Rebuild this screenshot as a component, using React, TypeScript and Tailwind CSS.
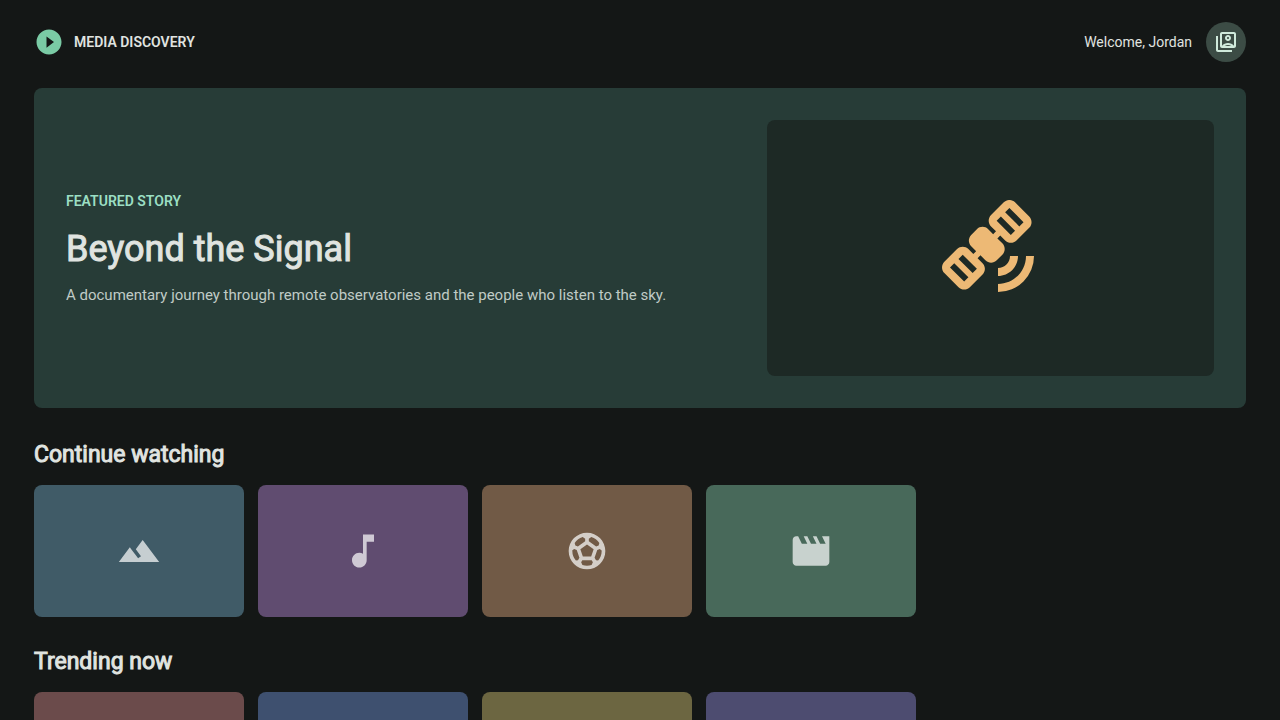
import React from 'react';
import {
  MdChecklist,
  MdLandscape,
  MdLocalFireDepartment,
  MdMovie,
  MdMusicNote,
  MdOutlineSwitchAccount,
  MdPlayCircleFilled,
  MdRocketLaunch,
  MdSatelliteAlt,
  MdSportsSoccer,
  MdTheaterComedy,
} from 'react-icons/md';
import type { IconType } from 'react-icons';

interface MediaItem {
  label: string;
  icon: IconType;
  color: string;
}

interface MediaRowProps {
  title: string;
  items: MediaItem[];
}

const continueWatching: MediaItem[] = [
  { label: 'Landscapes', icon: MdLandscape, color: 'bg-[#405b67]' },
  { label: 'Music', icon: MdMusicNote, color: 'bg-[#604c70]' },
  { label: 'Football', icon: MdSportsSoccer, color: 'bg-[#715a46]' },
  { label: 'Movies', icon: MdMovie, color: 'bg-[#48695a]' },
];

const trendingNow: MediaItem[] = [
  { label: 'Drama', icon: MdLocalFireDepartment, color: 'bg-[#6b4b4b]' },
  { label: 'Space', icon: MdRocketLaunch, color: 'bg-[#3e506f]' },
  { label: 'Lists', icon: MdChecklist, color: 'bg-[#6c6641]' },
  { label: 'Comedy', icon: MdTheaterComedy, color: 'bg-[#4d4c70]' },
];

const MediaRow: React.FC<MediaRowProps> = ({ title, items }) => (
  <section>
    <h2 className="text-[23px] leading-8 font-normal text-[#e0e4e0] [-webkit-text-stroke:1px]">{title}</h2>
    <div className="mt-3.5 flex gap-3.5 overflow-x-auto">
      {items.map(({ label, icon: Icon, color }) => (
        <button
          key={label}
          type="button"
          aria-label={label}
          className={`flex h-33 w-[210px] shrink-0 items-center justify-center rounded-lg ${color}`}
        >
          <Icon className="size-11 text-white/70" />
        </button>
      ))}
    </div>
  </section>
);

export default function App() {
  return (
    <div className="h-screen overflow-y-auto bg-[#141716] px-[34px] font-[Roboto,sans-serif] text-[#e0e4e0] [scrollbar-width:none]">
      <header className="flex items-center justify-between pt-[22px] pb-[26px]">
        <div className="flex items-center gap-2.5">
          <MdPlayCircleFilled className="size-[30px] text-[#7acba5]" />
          <span className="text-sm font-semibold">MEDIA DISCOVERY</span>
        </div>
        <div className="flex items-center gap-3.5">
          <span className="text-sm">Welcome, Jordan</span>
          <button
            type="button"
            aria-label="Switch account"
            className="flex size-10 items-center justify-center rounded-full bg-[#3c4c45] text-[#d0eadc]"
          >
            <MdOutlineSwitchAccount className="size-6" />
          </button>
        </div>
      </header>

      <main>
        {/* Featured story */}
        <section className="flex gap-[30px] rounded-lg bg-[#273c37] p-8">
          <div className="flex flex-3 flex-col justify-center">
            <p className="text-sm font-semibold text-[#9bdfc3]">FEATURED STORY</p>
            <h1 className="mt-[18px] text-4xl font-normal [-webkit-text-stroke:1px]">Beyond the Signal</h1>
            <p className="mt-4 text-[15px] leading-5 text-[#c0cbc6]">
              A documentary journey through remote observatories and the people who listen to the sky.
            </p>
          </div>
          <div className="flex h-64 flex-2 items-center justify-center rounded-lg bg-[#1d2925]">
            <MdSatelliteAlt className="size-24 text-[#edb975]" />
          </div>
        </section>

        <div className="mt-[31px] flex flex-col gap-[29px] pb-8">
          <MediaRow title="Continue watching" items={continueWatching} />
          <MediaRow title="Trending now" items={trendingNow} />
        </div>
      </main>
    </div>
  );
}
